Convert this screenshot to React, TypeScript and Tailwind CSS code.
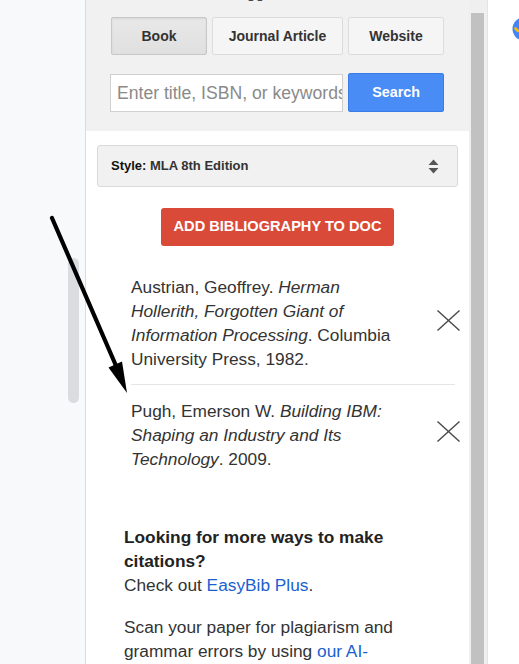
import React from "react";

function XIcon() {
  return (
    <svg width="23" height="21" viewBox="0 0 23 21" className="shrink-0">
      <line x1="0.5" y1="0.5" x2="22.5" y2="20.5" stroke="#4a4a4a" strokeWidth="1.4" />
      <line x1="22.5" y1="0.5" x2="0.5" y2="20.5" stroke="#4a4a4a" strokeWidth="1.4" />
    </svg>
  );
}

export default function App() {
  const font = { fontFamily: '"Liberation Sans", Arial, sans-serif' };
  return (
    <div className="relative flex w-[519px] h-[664px] overflow-hidden bg-white" style={font}>
      {/* left doc area */}
      <div className="w-[85px] shrink-0 bg-[#f8f9fa] pl-[68px] pt-[258px]">
        <div className="w-[11px] h-[145px] rounded-full bg-[#dadce0]" />
      </div>
      <div className="w-px shrink-0 bg-[#dadce0]" />

      {/* sidebar panel */}
      <div className="w-[383px] h-[664px] shrink-0 flex flex-col bg-white overflow-hidden">
        <div className="shrink-0 bg-[#f1f1f1] px-[25px] pb-[19px]">
          <div className="h-[3px] overflow-hidden flex items-end pl-[116px]">
            <span className="shrink-0 text-[16px] leading-[20px] text-[#444] whitespace-nowrap">Suggestions</span>
          </div>
          <div className="mt-[14px] flex gap-[5px]">
            <div className="w-[96px] h-[38px] flex items-center justify-center rounded-[2px] border border-[#c8c8c8] bg-gradient-to-b from-[#e8e8e8] to-[#e0e0e0] shadow-[inset_0_1px_2px_rgba(0,0,0,0.08)] text-[14px] font-bold text-[#333]">
              Book
            </div>
            <div className="w-[131px] h-[38px] flex items-center justify-center rounded-[2px] border border-[#dcdcdc] bg-[#f5f5f5] text-[14px] font-bold text-[#333]">
              Journal Article
            </div>
            <div className="w-[96px] h-[38px] flex items-center justify-center rounded-[2px] border border-[#dcdcdc] bg-[#f5f5f5] text-[14px] font-bold text-[#333]">
              Website
            </div>
          </div>
          <div className="mt-[18px] flex items-start">
            <div className="-ml-px mt-px w-[234px] h-[38px] border border-[#d0d0d0] bg-white flex items-center pl-[6px] overflow-hidden">
              <span className="text-[17.6px] text-[#8a8a8a] whitespace-nowrap">Enter title, ISBN, or keywords</span>
            </div>
            <div className="ml-[5px] w-[96px] h-[39px] rounded-[2px] border border-[#3b7de8] bg-[#4a8cf6] flex items-center justify-center text-[14.3px] font-bold text-white">
              Search
            </div>
          </div>
        </div>

        {/* style select */}
        <div className="shrink-0 mt-[14px] mx-[11px] h-[42px] rounded-[3px] border border-[#dadada] bg-[#f1f1f1] flex items-center justify-between pl-[13px] pr-[18px]">
          <span className="text-[13px] font-bold text-[#111]">
            Style: <span className="text-[#333]">MLA 8th Edition</span>
          </span>
          <svg width="11" height="15" viewBox="0 0 11 15">
            <polygon points="5.5,0.5 10.5,6 0.5,6" fill="#555" />
            <polygon points="0.5,9 10.5,9 5.5,14.5" fill="#555" />
          </svg>
        </div>

        {/* add bibliography */}
        <div className="shrink-0 mt-[21px] self-center w-[233px] h-[38px] rounded-[3px] bg-[#d94a38] flex items-center justify-center text-[14.6px] font-bold text-white">
          ADD BIBLIOGRAPHY TO DOC
        </div>

        {/* citations */}
        <div className="shrink-0 mt-[29px] ml-[45px] w-[330px] flex flex-col text-[17.3px] leading-[24px] text-[#333]">
          <div className="flex items-center justify-between pb-[13px]">
            <div className="w-[278px]">
              Austrian, Geoffrey. <i>Herman Hollerith, Forgotten Giant of Information Processing</i>. Columbia University Press, 1982.
            </div>
            <div className="mr-[1px] mt-[-6px]"><XIcon /></div>
          </div>
          <div className="w-[324px] h-px bg-[#e6e6e6]" />
          <div className="flex items-center justify-between pt-[14px]">
            <div className="w-[278px]">
              Pugh, Emerson W. <i>Building IBM: Shaping an Industry and Its Technology</i>. 2009.
            </div>
            <div className="mr-[1px] mt-[-8px]"><XIcon /></div>
          </div>
        </div>

        {/* promo */}
        <div className="shrink-0 mt-[54px] ml-[38px] w-[285px] text-[17.3px] leading-[24px] text-[#333]">
          <p>
            <span className="font-bold text-[#222]">Looking for more ways to make citations?</span>
            <br />
            Check out <span className="text-[#1a5fd0]">EasyBib Plus</span>.
          </p>
          <p className="mt-[18px]">
            Scan your paper for plagiarism and grammar errors by using <span className="text-[#1a5fd0]">our AI-powered checker</span>.
          </p>
        </div>
      </div>

      {/* sidebar scrollbar */}
      <div className="w-[18px] shrink-0 bg-[#efefef] pl-[2px] pt-[13px]">
        <div className="w-[13px] h-full bg-[#c1c1c1]" />
      </div>
      <div className="w-px shrink-0 bg-[#e4e4e4]" />

      {/* right strip */}
      <div className="flex-1 bg-white pt-[17px]">
        <svg width="31" height="24" viewBox="0 0 31 24">
          <circle cx="36" cy="12" r="11.5" fill="#4285f4" />
          <path d="M27.5 11.5 L30 14" stroke="#fbbc04" strokeWidth="2.6" strokeLinecap="round" />
        </svg>
      </div>

      {/* annotation arrow */}
      <svg className="pointer-events-none absolute left-0 top-0" width="519" height="664" viewBox="0 0 519 664">
        <line x1="52" y1="218" x2="117" y2="368" stroke="#000" strokeWidth="4.2" strokeLinecap="round" />
        <polygon points="127,393 108.5,367.5 122,361.5" fill="#000" />
      </svg>
    </div>
  );
}
